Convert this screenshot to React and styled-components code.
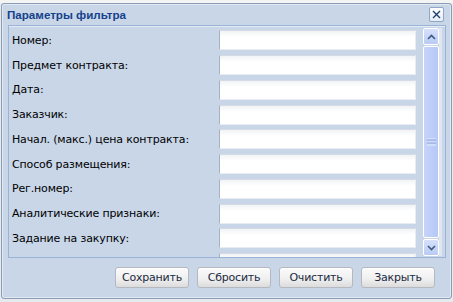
import React from "react";
import styled, { createGlobalStyle } from "styled-components";

const Global = createGlobalStyle`
  html, body { margin: 0; padding: 0; background: #eef1f5; }
  body { font-family: "DejaVu Sans", "Liberation Sans", sans-serif; }
`;

const Page = styled.div`
  width: 453px;
  height: 302px;
  padding: 3px 1px 3px 1px;
  box-sizing: border-box;
  background: linear-gradient(#f4f4f4, #f4f4f4) top/100% 3px no-repeat, #e6e9ee;
`;

const Window = styled.div`
  height: 296px;
  box-sizing: border-box;
  border: 1px solid #8b9db3;
  border-radius: 3px;
  background: #c8d6e8;
  box-shadow: inset 0 0 0 1px #dfe8f3;
  display: flex;
  flex-direction: column;
`;

const Header = styled.div`
  height: 21px;
  display: flex;
  align-items: center;
  justify-content: space-between;
  padding: 0 7px 0 5px;
`;

const Title = styled.div`
  font-family: "Liberation Sans", Arial, sans-serif;
  font-weight: bold;
  font-size: 11.6px;
  color: #15428b;
`;

const CloseBtn = styled.div`
  width: 13px;
  height: 13px;
  border: 1px solid #8fa7c6;
  border-radius: 2px;
  background: linear-gradient(#ffffff, #e4ecf7);
  display: flex;
  align-items: center;
  justify-content: center;
`;

const Body = styled.div`
  margin: 0 5px 0 6px;
  height: 233px;
  box-sizing: border-box;
  border: 1px solid #99b3d6;
  box-shadow: inset 0 1px 0 #e3ebf5;
  display: flex;
  padding: 2px 3px 1px 3px;
  overflow: hidden;
`;

const Form = styled.div`
  flex: 1;
  display: grid;
  grid-template-columns: 207px 197px;
  grid-auto-rows: 24.75px;
  align-items: center;
`;

const Label = styled.div`
  font-family: "DejaVu Sans", sans-serif;
  font-size: 11px;
  color: #000;
  letter-spacing: -0.15px;
`;

const Input = styled.div`
  height: 20px;
  box-sizing: border-box;
  border-top: 1px solid #d4dbe4;
  border-left: 1px solid #a5b2c4;
  border-right: 1px solid #e8edf3;
  border-bottom: 1px solid #e8edf3;
  background: linear-gradient(#f1f3f5, #ffffff 6px);
`;

const ScrollBar = styled.div`
  width: 17px;
  margin-left: 7px;
  display: flex;
  flex-direction: column;
  border-right: 3px solid #dfe6f1;
`;

const ArrowBtn = styled.div`
  height: 17px;
  box-sizing: border-box;
  border: 1px solid #ffffff;
  border-radius: 2px;
  background: linear-gradient(#d6e1fb, #b9cbf4);
  display: flex;
  align-items: center;
  justify-content: center;
`;

const Track = styled.div`
  flex: 1;
  margin: 1px 0;
  border: 1px solid #ffffff;
  border-radius: 2px;
  background: linear-gradient(90deg, #c6d4fb, #b6c8f6);
  display: flex;
  align-items: center;
  justify-content: center;
`;

const Footer = styled.div`
  flex: 1;
  display: flex;
  justify-content: flex-end;
  align-items: center;
  gap: 8px;
  padding: 0 16px 2px 0;
`;

const Button = styled.div`
  width: 74px;
  height: 21px;
  box-sizing: border-box;
  border: 1px solid #b5b9bf;
  border-radius: 3px;
  background: linear-gradient(#fbfbfb 0%, #f0f0f0 55%, #dcdcdc 100%);
  box-shadow: inset 0 1px 0 #fff;
  display: flex;
  align-items: center;
  justify-content: center;
  font-family: "DejaVu Sans", sans-serif;
  font-size: 11px;
  color: #1a2a40;
  letter-spacing: -0.2px;
`;

const fields = [
  "Номер:",
  "Предмет контракта:",
  "Дата:",
  "Заказчик:",
  "Начал. (макс.) цена контракта:",
  "Способ размещения:",
  "Рег.номер:",
  "Аналитические признаки:",
  "Задание на закупку:",
  "",
];

export default function App() {
  return (
    <>
      <Global />
      <Page>
        <Window>
          <Header>
            <Title>Параметры фильтра</Title>
            <CloseBtn>
              <svg width="9" height="9" viewBox="0 0 9 9">
                <path d="M1 1 L8 8 M8 1 L1 8" stroke="#1f3f73" strokeWidth="1.4" />
              </svg>
            </CloseBtn>
          </Header>
          <Body>
            <Form>
              {fields.map((f, i) => (
                <React.Fragment key={i}>
                  <Label>{f}</Label>
                  <Input />
                </React.Fragment>
              ))}
            </Form>
            <ScrollBar>
              <ArrowBtn>
                <svg width="9" height="6" viewBox="0 0 9 6">
                  <path d="M1 5 L4.5 1.5 L8 5" stroke="#3d5a80" strokeWidth="1.6" fill="none" />
                </svg>
              </ArrowBtn>
              <Track>
                <svg width="9" height="8" viewBox="0 0 9 8">
                  <path d="M0 1 H9 M0 4 H9 M0 7 H9" stroke="#e8eefc" strokeWidth="1" />
                  <path d="M0 2 H9 M0 5 H9" stroke="#8fa6e0" strokeWidth="1" />
                </svg>
              </Track>
              <ArrowBtn>
                <svg width="9" height="6" viewBox="0 0 9 6">
                  <path d="M1 1 L4.5 4.5 L8 1" stroke="#3d5a80" strokeWidth="1.6" fill="none" />
                </svg>
              </ArrowBtn>
            </ScrollBar>
          </Body>
          <Footer>
            <Button>Сохранить</Button>
            <Button>Сбросить</Button>
            <Button>Очистить</Button>
            <Button>Закрыть</Button>
          </Footer>
        </Window>
      </Page>
    </>
  );
}
